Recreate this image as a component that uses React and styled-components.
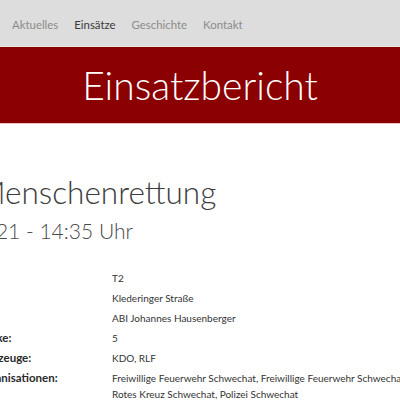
import React from "react";
import styled, { createGlobalStyle } from "styled-components";

const Global = createGlobalStyle`
  html, body { margin: 0; padding: 0; background: #fff; }
  body { font-family: Lato, "Open Sans", sans-serif; color: #333; overflow: hidden; width: 400px; }
`;

const Page = styled.div`
  width: 400px;
  overflow: hidden;
`;

const NavBar = styled.nav`
  box-sizing: content-box;
  height: 43px;
  padding: 3px 0 0 12px;
  display: flex;
  align-items: center;
  gap: 16px;
  background: #dddddd;
  border-bottom: 1px solid #e9e9e9;
`;

const NavLink = styled.a`
  font-size: 11.4px;
  line-height: 1.2;
  text-decoration: none;
  color: ${(p) => (p.$active ? "#3a3a3a" : "#8c8c8c")};
`;

const Banner = styled.header`
  height: 76px;
  background: #8b0000;
  border-bottom: 1px solid #efc3c3;
  display: flex;
  align-items: center;
  justify-content: center;
`;

const BannerTitle = styled.h1`
  margin: 0;
  font-size: 39px;
  line-height: 1.2;
  font-weight: 300;
  color: #ffffff;
`;

const Content = styled.main`
  margin-left: -20px;
  padding-top: 50px;
`;

const Heading = styled.h2`
  margin: 0 0 0 -3px;
  font-size: 31.5px;
  line-height: 36px;
  font-weight: 300;
  color: #3c3c3c;
  white-space: nowrap;
`;

const DateLine = styled.h3`
  margin: 8px 0 0 -67px;
  font-size: 21px;
  line-height: 26px;
  font-weight: 300;
  color: #4a4a4a;
  white-space: nowrap;
`;

const Details = styled.dl`
  margin: 24px 0 0 -4px;
  display: grid;
  grid-template-columns: 136px 1fr;
  line-height: 16px;
`;

const Label = styled.dt`
  padding: 2px 0;
  font-size: 11.5px;
  font-weight: 700;
  color: #2a2a2a;
  white-space: nowrap;
`;

const Value = styled.dd`
  margin: 0;
  padding: 2px 0;
  font-size: 10px;
  color: #333;
  white-space: nowrap;
`;

const rows = [
  ["", "T2"],
  ["", "Klederinger Straße"],
  ["", "ABI Johannes Hausenberger"],
  ["Stärke:", "5"],
  ["Fahrzeuge:", "KDO, RLF"],
];

export default function App() {
  return (
    <Page>
      <Global />
      <NavBar>
        <NavLink href="#">Aktuelles</NavLink>
        <NavLink href="#" $active>Einsätze</NavLink>
        <NavLink href="#">Geschichte</NavLink>
        <NavLink href="#">Kontakt</NavLink>
      </NavBar>
      <Banner>
        <BannerTitle>Einsatzbericht</BannerTitle>
      </Banner>
      <Content>
        <Heading>Menschenrettung</Heading>
        <DateLine>12.03.2021 - 14:35 Uhr</DateLine>
        <Details>
          {rows.map(([l, v], i) => (
            <React.Fragment key={i}>
              <Label>{l}</Label>
              <Value>{v}</Value>
            </React.Fragment>
          ))}
          <Label>Organisationen:</Label>
          <Value>
            Freiwillige Feuerwehr Schwechat, Freiwillige Feuerwehr Schwechat-Rannersdorf,
            <br />
            Rotes Kreuz Schwechat, Polizei Schwechat
          </Value>
        </Details>
      </Content>
    </Page>
  );
}
